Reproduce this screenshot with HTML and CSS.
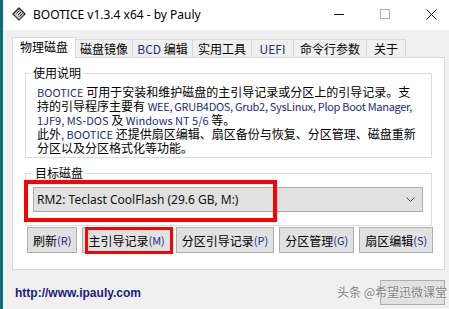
FILE: index.html
```html
<!DOCTYPE html>
<html lang="zh-CN">
<head>
<meta charset="utf-8">
<title>BOOTICE v1.3.4 x64 - by Pauly</title>
<link rel="stylesheet" href="styles.css">
</head>
<body>
<div class="edge"></div>
<div class="win">
  <div class="titlebar">
    <svg class="appicon" width="14" height="14" viewBox="0 0 14 14">
      <path d="M7 1 L13 7 L7 13 L1 7 Z" fill="#cfcfcf" stroke="#1a1a1a" stroke-width="1.2" stroke-linejoin="round"/>
      <path d="M4.5 6.5 L7.5 3.5 M6 8 L9 5 M7.5 9.5 L10.5 6.5" stroke="#1a1a1a" stroke-width="1"/>
      <path d="M1.5 7.5 L7 13 L12.5 7.5" fill="none" stroke="#555" stroke-width="1"/>
    </svg>
    <span class="title">BOOTICE v1.3.4 x64 - by Pauly</span>
    <div class="caption">
      <div class="cbtn"><span class="g-min"></span></div>
      <div class="cbtn"><span class="g-max"></span></div>
      <div class="cbtn">
        <svg width="11" height="11" viewBox="0 0 11 11"><path d="M0.5 0.5 L10.5 10.5 M10.5 0.5 L0.5 10.5" stroke="#111" stroke-width="1"/></svg>
      </div>
    </div>
  </div>

  <div class="content">
    <div class="tabs">
      <div class="tab active">物理磁盘</div>
      <div class="tab">磁盘镜像</div>
      <div class="tab"><span class="en">BCD</span>&nbsp;编辑</div>
      <div class="tab">实用工具</div>
      <div class="tab"><span class="en">UEFI</span></div>
      <div class="tab">命令行参数</div>
      <div class="tab">关于</div>
    </div>
    <div class="panel">
      <fieldset class="grp">
        <legend>使用说明</legend>
        <div class="desc">
          <span class="line"><span class="en">BOOTICE</span> 可用于安装和维护磁盘的主引导记录或分区上的引导记录。支</span>
          <span class="line">持的引导程序主要有 <span class="en tight">WEE, GRUB4DOS, Grub2, SysLinux, Plop Boot Manager,</span></span>
          <span class="line"><span class="en">1JF9, MS-DOS</span> 及 <span class="en">Windows NT 5/6</span> 等。</span>
          <span class="line">此外<span class="en">, BOOTICE</span> 还提供扇区编辑、扇区备份与恢复、分区管理、磁盘重新</span>
          <span class="line">分区以及分区格式化等功能。</span>
        </div>
      </fieldset>
      <fieldset class="grp grp2">
        <legend>目标磁盘</legend>
        <div class="combo-wrap">
          <div class="combo">
            <span>RM2: Teclast CoolFlash (29.6 GB, M:)</span>
            <svg class="chev" width="9" height="6" viewBox="0 0 9 6"><path d="M0.5 0.5 L4.5 4.5 L8.5 0.5" fill="none" stroke="#444" stroke-width="1"/></svg>
          </div>
          <div class="mark"></div>
        </div>
      </fieldset>
      <div class="btns">
        <div class="btn">刷新<span class="en">(R)</span></div>
        <div class="btn hl">主引导记录<span class="en">(M)</span></div>
        <div class="btn">分区引导记录<span class="en">(P)</span></div>
        <div class="btn">分区管理<span class="en">(G)</span></div>
        <div class="btn">扇区编辑<span class="en">(S)</span></div>
      </div>
    </div>
    <div class="foot">
      <span class="url">http://www.ipauly.com</span>
      <div class="closebtn"></div>
      <span class="wm">头条 @希望迅微课堂</span>
    </div>
  </div>
</div>
</body>
</html>
```
FILE: styles.css
```css
html, body {
  margin: 0;
  padding: 0;
}
body {
  width: 449px;
  height: 309px;
  overflow: hidden;
  background: #f0f0f0;
  display: flex;
  font-family: "Noto Sans CJK SC", sans-serif;
  font-size: 12px;
  color: #000;
}
.edge {
  width: 3px;
  flex: none;
  background: #0f6b78;
}
.win {
  width: 451px;
  flex: none;
  display: flex;
  flex-direction: column;
}
.titlebar {
  height: 30px;
  box-sizing: border-box;
  padding-bottom: 2px;
  background: #fff;
  display: flex;
  align-items: center;
}
.appicon {
  margin-left: 9px;
  flex: none;
}
.title {
  margin-left: 7px;
  font-family: "Noto Sans", sans-serif;
  font-size: 12px;
  color: #000;
}
.caption {
  margin-left: auto;
  display: flex;
  height: 100%;
}
.cbtn {
  width: 46px;
  display: flex;
  align-items: center;
  justify-content: center;
}
.g-min {
  width: 10px;
  height: 1px;
  background: #111;
}
.g-max {
  width: 8px;
  height: 8px;
  border: 1px solid #b0b0b0;
}
.en {
  color: #232c7c;
}
.content {
  padding: 7px 9px 0;
}
.tabs {
  display: flex;
  align-items: flex-end;
  height: 21px;
  margin-bottom: -1px;
  position: relative;
  z-index: 1;
}
.tab {
  height: 18px;
  box-sizing: border-box;
  margin-bottom: 1px;
  margin-left: -1px;
  border: 1px solid #d9d9d9;
  border-bottom: none;
  display: flex;
  align-items: center;
  justify-content: center;
  line-height: 16px;
  background: #f0f0f0;
  white-space: nowrap;
}
.tab:nth-child(2) { width: 58px; }
.tab:nth-child(3) { width: 61px; }
.tab:nth-child(4) { width: 60px; }
.tab:nth-child(5) { width: 43px; }
.tab:nth-child(6) { width: 74px; }
.tab:nth-child(7) { width: 40px; }
.tab.active {
  width: 64px;
  margin-left: 0;
  height: 21px;
  margin-bottom: 0;
  padding-bottom: 2px;
  background: #fff;
  position: relative;
  z-index: 2;
}
.panel {
  height: 213px;
  box-sizing: border-box;
  background: #fff;
  border: 1px solid #d9d9d9;
  padding: 7px 12px 0;
}
.grp {
  margin: 0;
  min-width: 0;
  border: 1px solid #dcdcdc;
  padding: 4px 10px 2px 11px;
}
.grp legend {
  padding: 0 2px;
  margin-left: -6px;
  line-height: 16px;
}
.line {
  display: block;
  white-space: nowrap;
  line-height: 14px;
}
.desc .en {
  font-size: 11px;
}
.desc .tight {
  letter-spacing: -0.3px;
}
.grp2 {
  margin-top: 7px;
  padding: 6px 8px 13px 7px;
}
.grp2 legend {
  margin-left: 0;
}
.combo-wrap {
  position: relative;
}
.combo {
  height: 25px;
  box-sizing: border-box;
  border: 1px solid #adadad;
  background: #e1e1e1;
  display: flex;
  align-items: center;
  padding: 0 7px 0 3px;
  font-family: "Noto Sans", sans-serif;
  font-size: 12px;
  color: #111;
}
.chev {
  margin-left: auto;
}
.mark {
  position: absolute;
  left: -9px;
  top: -7px;
  width: 253px;
  height: 42px;
  box-sizing: border-box;
  border: 4px solid #ff0000;
}
.btns {
  display: flex;
  gap: 5px;
  margin: 1px 0 0 2px;
}
.btn {
  height: 26px;
  box-sizing: border-box;
  border: 1px solid #adadad;
  background: #e1e1e1;
  padding: 0 5px;
  display: flex;
  align-items: center;
  white-space: nowrap;
}
.btn .en {
  font-size: 11px;
}
.btn.hl {
  position: relative;
}
.btn.hl::after {
  content: "";
  position: absolute;
  left: 2px;
  top: -1px;
  right: -3px;
  bottom: -2px;
  border: 3px solid #ff0000;
}
.foot {
  position: relative;
  display: flex;
  align-items: center;
  margin-top: 10px;
  height: 25px;
}
.url {
  margin-left: 3px;
  font-family: "Liberation Sans", sans-serif;
  font-weight: bold;
  font-size: 12px;
  color: #1c1c80;
}
.closebtn {
  margin-left: auto;
  width: 65px;
  height: 25px;
  box-sizing: border-box;
  border: 1px solid #adadad;
  background: #e1e1e1;
}
.wm {
  position: absolute;
  right: -2px;
  top: 3px;
  font-size: 12px;
  color: #7d7d7d;
  text-shadow: 0 0 1px #fff, 0 0 2px #fff;
  white-space: nowrap;
}
```
